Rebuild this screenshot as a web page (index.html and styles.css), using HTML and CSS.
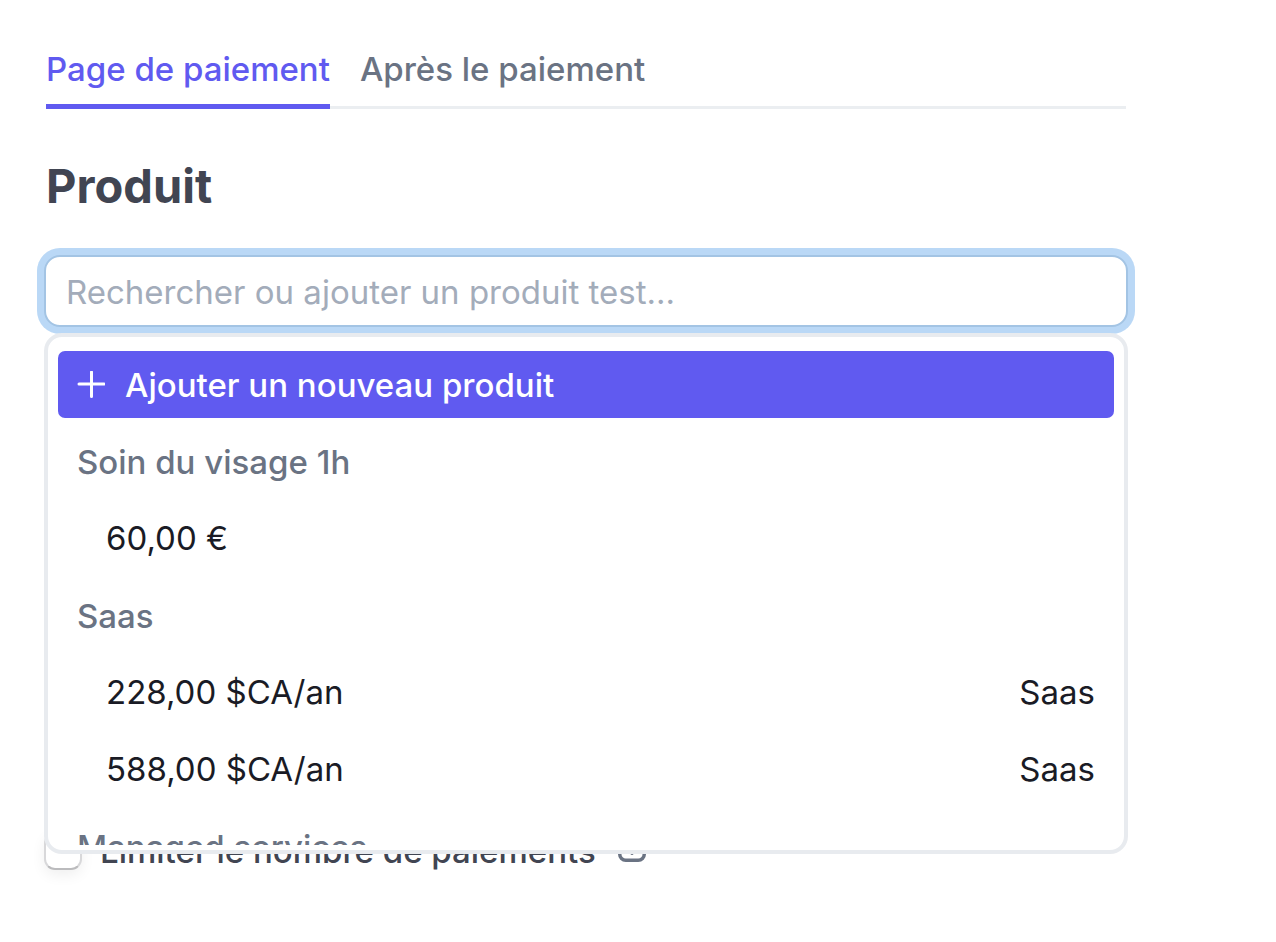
FILE: index.html
```html
<!DOCTYPE html>
<html lang="fr">
<head>
<meta charset="utf-8">
<meta name="viewport" content="width=device-width, initial-scale=1">
<title>Page de paiement</title>
<link rel="stylesheet" href="styles.css">
</head>
<body>
<main class="page">
  <nav class="tabs" aria-label="Sections">
    <a class="tab tab-active" href="#paiement" aria-current="page">Page de paiement</a>
    <a class="tab" href="#apres">Après le paiement</a>
  </nav>
  <h1 class="heading"><label for="product">Produit</label></h1>
  <div class="field">
    <input class="search" id="product" type="text" placeholder="Rechercher ou ajouter un produit test..." autocomplete="off">
    <div class="menu">
      <div class="menu-list">
        <button class="option option-add" type="button">
          <svg class="plus" viewBox="0 0 28 28" aria-hidden="true"><path d="M14.500 1V25.500M2 13H27" fill="none" stroke="currentColor" stroke-width="3" stroke-linecap="round"/></svg>
          <span>Ajouter un nouveau produit</span>
        </button>
        <div class="group">Soin du visage 1h</div>
        <button class="option" type="button"><span>60,00 €</span></button>
        <div class="group">Saas</div>
        <button class="option" type="button"><span>228,00 $CA/an</span><span>Saas</span></button>
        <button class="option" type="button"><span>588,00 $CA/an</span><span>Saas</span></button>
        <div class="group">Managed services</div>
      </div>
    </div>
  </div>
  <div class="limit">
    <input class="check" id="limit" type="checkbox">
    <label for="limit">Limiter le nombre de paiements</label>
    <svg class="hint" viewBox="0 0 28 28" aria-hidden="true"><rect x="1.750" y="1.750" width="24.500" height="21.500" rx="6" fill="none" stroke="currentColor" stroke-width="3.500"/><path d="M14 8V16.500" fill="none" stroke="currentColor" stroke-width="3" stroke-linecap="round"/></svg>
  </div>
</main>
</body>
</html>
```
FILE: styles.css
```css
* {
  box-sizing: border-box;
}

body {
  margin: 0;
  background: #fff;
  color: #1a1b25;
  font: 400 33px/40px Inter, "Liberation Sans", sans-serif;
}

.page {
  padding: 49px 150px 72px 46px;
}

.tabs {
  display: flex;
  gap: 30px;
  box-shadow: inset 0 -3px #ebeef1;
}

.tab {
  padding-bottom: 15px;
  border-bottom: 5px solid transparent;
  color: #6a7383;
  font-weight: 500;
  text-decoration: none;
}

.tab-active {
  border-color: #605af0;
  color: #605af0;
}

.heading {
  margin: 47px 0 39px;
  color: #414552;
  font-size: 47px;
  font-weight: 700;
  line-height: 60px;
}

.field {
  position: relative;
  margin: 0 -2px;
}

.search {
  display: block;
  width: 100%;
  height: 72px;
  padding: 2px 20px 0;
  border: 2px solid #a3c4e4;
  border-radius: 16px;
  outline: none;
  background: #fff;
  box-shadow: 0 0 0 7px #bad8f6;
  color: #1a1b25;
  font: inherit;
}

.search::placeholder {
  color: #a3acba;
  opacity: 1;
}

.menu {
  position: absolute;
  z-index: 1;
  top: 100%;
  left: 0;
  right: 0;
  margin-top: 6px;
  padding: 14px 10px 5px;
  border: 4px solid #e8ebef;
  border-radius: 18px;
  background: #fff;
}

.menu-list {
  display: flex;
  flex-direction: column;
  gap: 10px;
  height: 494px;
  overflow: hidden;
}

.option,
.group {
  display: flex;
  flex: none;
  align-items: center;
  justify-content: space-between;
  height: 67px;
  padding: 0 19px;
}

.option {
  padding: 0 19px 2px 48px;
  border: 0;
  border-radius: 7px;
  background: none;
  color: #1a1b25;
  font: inherit;
}

.option-add {
  justify-content: flex-start;
  gap: 20px;
  padding: 0 19px;
  background: #605af0;
  color: #fff;
  font-weight: 500;
}

.group {
  color: #6a7383;
  font-weight: 500;
}

.plus,
.hint {
  flex: none;
  width: 28px;
  height: 28px;
}

.limit {
  display: flex;
  align-items: center;
  gap: 18px;
  margin: 504px -2px 0;
  color: #414552;
  font-weight: 500;
}

.check {
  flex: none;
  width: 38px;
  height: 38px;
  margin: 0;
  appearance: none;
  border: 2px solid #d8d8da;
  border-bottom-color: #bbbbbd;
  border-radius: 11px;
  background: #fff;
  box-shadow: 0 5px 14px #00000010;
}

.hint {
  margin-left: 4px;
  color: #6a7383;
}
```
